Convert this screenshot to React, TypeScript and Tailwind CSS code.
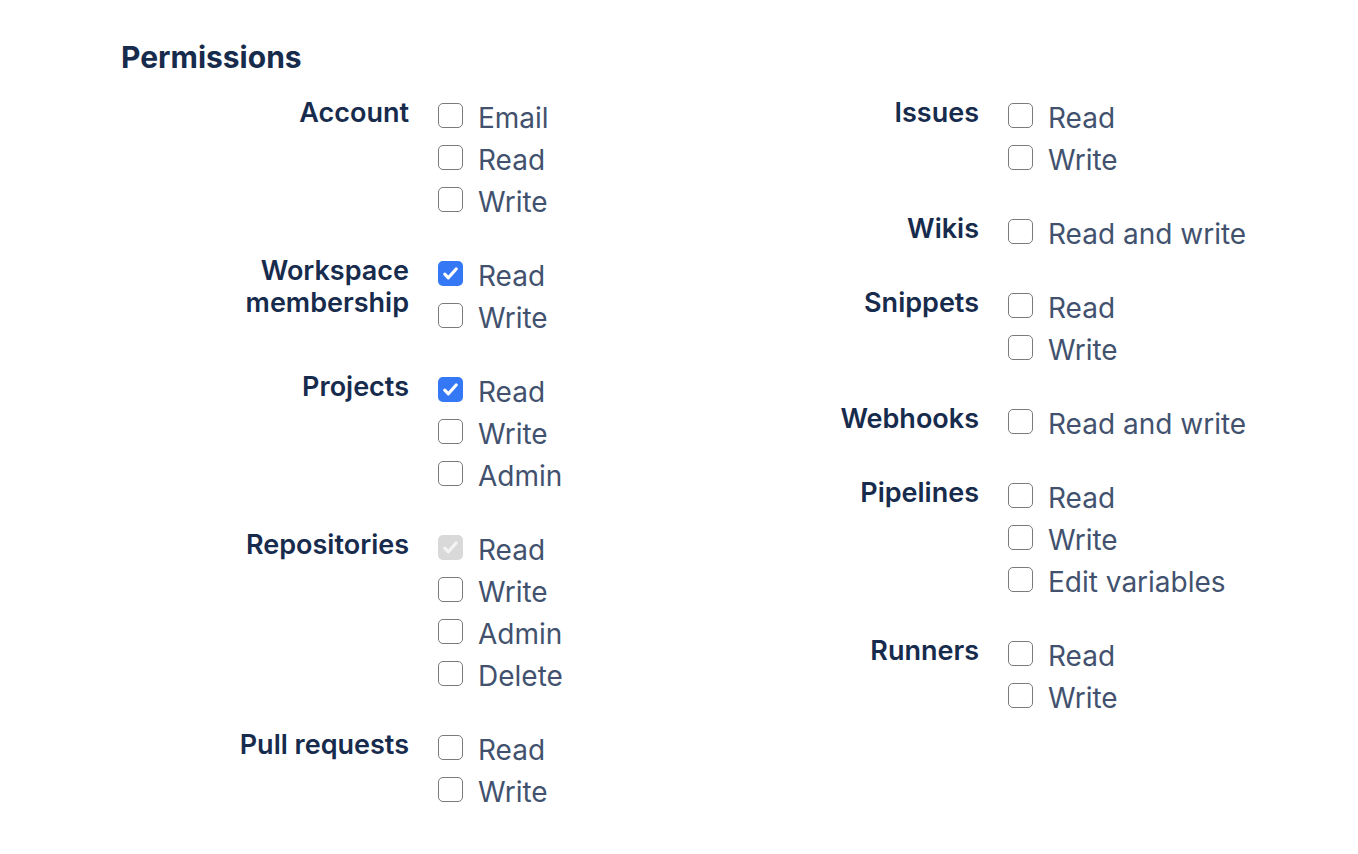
type Opt = { label: string; state?: "checked" | "disabled" };
type Group = { name: string[]; options: Opt[] };

const left: Group[] = [
  { name: ["Account"], options: [{ label: "Email" }, { label: "Read" }, { label: "Write" }] },
  {
    name: ["Workspace", "membership"],
    options: [{ label: "Read", state: "checked" }, { label: "Write" }],
  },
  {
    name: ["Projects"],
    options: [{ label: "Read", state: "checked" }, { label: "Write" }, { label: "Admin" }],
  },
  {
    name: ["Repositories"],
    options: [
      { label: "Read", state: "disabled" },
      { label: "Write" },
      { label: "Admin" },
      { label: "Delete" },
    ],
  },
  { name: ["Pull requests"], options: [{ label: "Read" }, { label: "Write" }] },
];

const right: Group[] = [
  { name: ["Issues"], options: [{ label: "Read" }, { label: "Write" }] },
  { name: ["Wikis"], options: [{ label: "Read and write" }] },
  { name: ["Snippets"], options: [{ label: "Read" }, { label: "Write" }] },
  { name: ["Webhooks"], options: [{ label: "Read and write" }] },
  {
    name: ["Pipelines"],
    options: [{ label: "Read" }, { label: "Write" }, { label: "Edit variables" }],
  },
  { name: ["Runners"], options: [{ label: "Read" }, { label: "Write" }] },
];

function Box({ state }: { state?: Opt["state"] }) {
  if (state === "checked") {
    return (
      <span className="mb-[6px] flex h-[25px] w-[25px] shrink-0 items-center justify-center rounded-[5px] bg-[#3478f6]">
        <svg viewBox="0 0 16 16" className="h-[19px] w-[19px]" fill="none">
          <path d="M3.2 8.6l3 3 6.6-7.4" stroke="#fff" strokeWidth="2.7" strokeLinecap="round" strokeLinejoin="round" />
        </svg>
      </span>
    );
  }
  if (state === "disabled") {
    return (
      <span className="mb-[6px] flex h-[25px] w-[25px] shrink-0 items-center justify-center rounded-[5px] bg-[#d9d9d9]">
        <svg viewBox="0 0 16 16" className="h-[19px] w-[19px]" fill="none">
          <path d="M3.2 8.6l3 3 6.6-7.4" stroke="#f4f4f4" strokeWidth="2.7" strokeLinecap="round" strokeLinejoin="round" />
        </svg>
      </span>
    );
  }
  return (
    <span className="mb-[6px] h-[25px] w-[25px] shrink-0 rounded-[5px] border-[1.5px] border-[#7b7b7b] bg-white" />
  );
}

function Section({ groups }: { groups: Group[] }) {
  return (
    <div className="flex flex-col gap-[32px]">
      {groups.map((g) => (
        <div key={g.name.join(" ")} className="flex gap-[29px]">
          <div className="w-[288px] shrink-0 text-right text-[27px] leading-[32px] font-semibold text-[#172b4d]">
            {g.name.map((n) => (
              <div key={n}>{n}</div>
            ))}
          </div>
          <div className="flex flex-col">
            {g.options.map((o) => (
              <label key={o.label} className="flex h-[42px] items-center gap-[15px]">
                <Box state={o.state} />
                <span className="text-[28px] leading-[42px] text-[#42526e]">{o.label}</span>
              </label>
            ))}
          </div>
        </div>
      ))}
    </div>
  );
}

export default function App() {
  return (
    <main
      className="min-h-screen bg-white px-[121px] pt-[39px]"
      style={{ fontFamily: "Inter, 'Noto Sans', sans-serif" }}
    >
      <h2 className="text-[30px] leading-[36px] font-bold text-[#172b4d]">Permissions</h2>
      <div className="mt-[22px] grid w-[1140px] grid-cols-2">
        <Section groups={left} />
        <Section groups={right} />
      </div>
    </main>
  );
}
